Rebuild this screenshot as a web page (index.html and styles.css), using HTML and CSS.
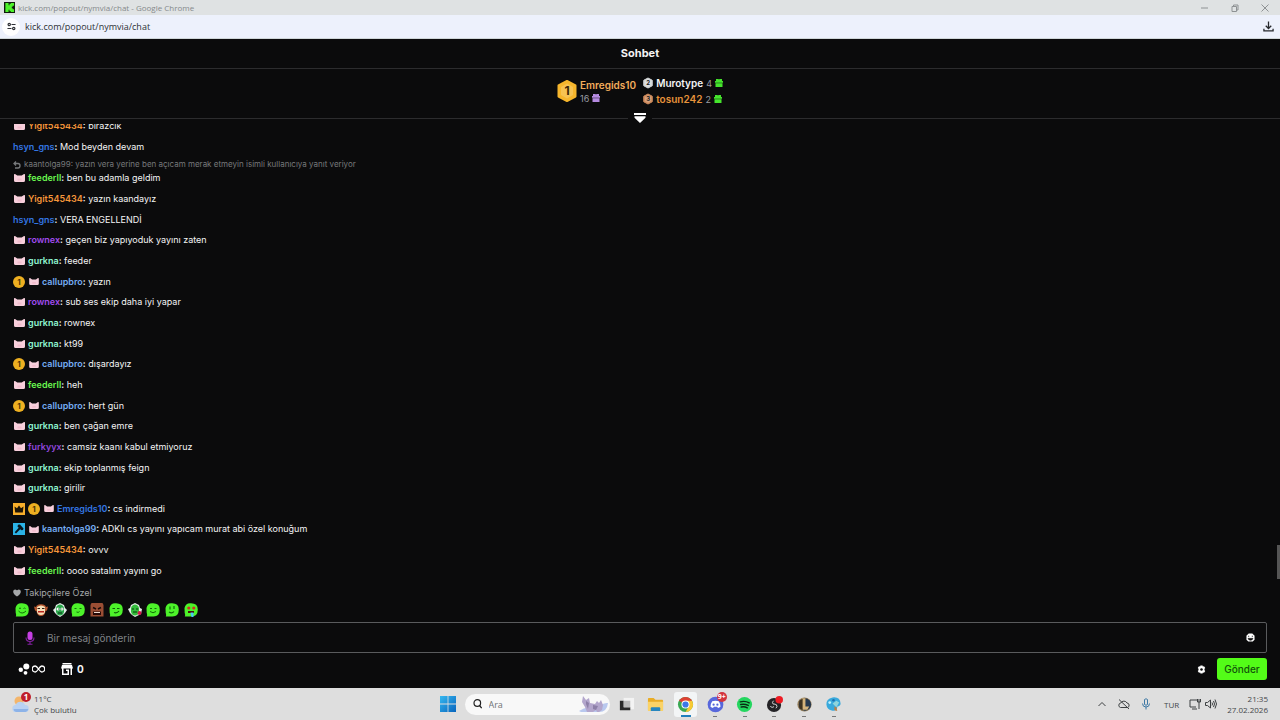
FILE: index.html
```html
<!DOCTYPE html>
<html lang="tr">
<head>
<meta charset="utf-8">
<title>kick.com/popout/nymvia/chat</title>
<link rel="stylesheet" href="styles.css">
</head>
<body>
<svg class="defs" aria-hidden="true">
  <symbol id="pig" viewBox="0 0 11 8"><path d="M0 .3 1 0 3.300 1.600H7.700L10 0l1 .3V6.500Q11 8 9.500 8H1.500Q0 8 0 6.500Z" fill="#f8cfdc"/><path d="M3.500 4.500h4v2h-4z" fill="#f2bccd"/></symbol>
  <symbol id="gift" viewBox="0 0 8 8"><path d="M1 0h2.500L4 .8 4.500 0H7v2h1v1.800H0V2h1zM.5 4.300h7V8h-7z" fill="currentColor"/><path d="M.5 3.800h7v.7h-7z" fill="currentColor" opacity=".4"/></symbol>
  <symbol id="crown" viewBox="0 0 12 12"><path d="M0 0h12v12H0z" fill="#f7ae2b"/><path d="M1.500 3.500 4 5.200 6 2.500l2 2.700 2.500-1.700L9.800 9.500H2.200z" fill="#1d1405"/></symbol>
  <symbol id="hammer" viewBox="0 0 12 12"><path d="M0 0h12v12H0z" fill="#2bb3e6"/><path d="M5 1.800 7 1.500 10.500 5.500 10 7 8.500 7.200 7.200 6.200 3 10.500 1.700 9.300 5.700 4.800 4.500 3.500z" fill="#08161d"/></symbol>
  <symbol id="blob" viewBox="0 0 14 14"><path d="M.5 5Q1.500 .5 6 .3 13.800-.2 13.800 6.500 13.800 13.500 7.500 13.500H.8Q1.500 12 .7 10Z" fill="#4df32a"/></symbol>
  <symbol id="hexa" viewBox="0 0 20 22"><path d="M10 1 18.500 5.500V16.500L10 21 1.500 16.500V5.500Z" fill="currentColor" stroke="currentColor" stroke-width="2" stroke-linejoin="round"/><path d="M10 3.500 16 7V15L10 18.500 4 15V7Z" fill="#fff" opacity=".18"/></symbol>
</svg>

<header class="titlebar">
  <svg class="favicon" viewBox="0 0 12 12"><path d="M0 0h12v12H0z" fill="#101a0e"/><path d="M1.500 1H5v2.500h1V2h1.500V1H11v3H9.500v1.200H8.500v1.600h1V8H11v3H7.500v-1H6V8.500H5V11H1.500z" fill="#4df32a"/></svg>
  <span class="window-title">kick.com/popout/nymvia/chat - Google Chrome</span>
  <div class="window-buttons">
    <button type="button" aria-label="Simge durumuna küçült"><svg viewBox="0 0 8 8"><path d="M0 4h7"/></svg></button>
    <button type="button" aria-label="Önceki boyut"><svg viewBox="0 0 8 8"><path d="M1 2.500h4.500v5H1zM2.500 2.500v-1.500h4.500v5H5.500"/></svg></button>
    <button type="button" aria-label="Kapat"><svg viewBox="0 0 8 8"><path d="m.5.5 7 7m0-7-7 7"/></svg></button>
  </div>
</header>

<div class="addressbar">
  <button type="button" class="site-info" aria-label="Site bilgileri"><svg viewBox="0 0 10 10" fill="none" stroke="#303236" stroke-width="1.300"><circle cx="2.500" cy="2.800" r="1.300"/><path d="M5 2.800h4.500M.5 7.200H5"/><circle cx="7.500" cy="7.200" r="1.300"/></svg></button>
  <input class="url" type="text" value="kick.com/popout/nymvia/chat" aria-label="Adres">
  <button type="button" class="install" aria-label="Yükle"><svg viewBox="0 0 12 12" fill="none" stroke="#26282c" stroke-width="1.400"><path d="M6 .5V8M3 5.200l3 3 3-3M1 8.500v2.300h10V8.500"/></svg></button>
</div>

<main class="chat">
  <h1 class="chat-title">Sohbet</h1>
  <section class="leaders">
    <div class="leader-first">
      <span class="rank rank-big gold"><svg><use href="#hexa"/></svg><b>1</b></span>
      <div>
        <div class="leader-name peach">Emregids10</div>
        <div class="gifts">16 <svg class="gift purple"><use href="#gift"/></svg></div>
      </div>
    </div>
    <div class="leader-rest">
      <div class="leader"><span class="rank silver"><svg><use href="#hexa"/></svg><b>2</b></span><span class="leader-name">Murotype</span><span class="gifts">4 <svg class="gift green"><use href="#gift"/></svg></span></div>
      <div class="leader"><span class="rank bronze"><svg><use href="#hexa"/></svg><b>3</b></span><span class="leader-name orange">tosun242</span><span class="gifts">2 <svg class="gift green"><use href="#gift"/></svg></span></div>
    </div>
  </section>
  <div class="divider"><button type="button" aria-label="Genişlet"><svg viewBox="0 0 12 10"><path d="M0 0h12v2H0zM.5 3.200h11v1.500L6 10 .5 4.700z" fill="#fff"/></svg></button></div>

  <div class="log">
    <ul class="messages">
      <li><svg class="pig"><use href="#pig"/></svg><p><b class="c-orange">Yigit545434</b><b>:</b> birazcık</p></li>
      <li><p><b class="c-blue">hsyn_gns</b><b>:</b> Mod beyden devam</p></li>
      <li class="with-reply"><div class="reply"><svg viewBox="0 0 8 8" fill="none" stroke="#77797b" stroke-width="1.300"><path d="M3 .5 1 2.500l2 2M1 2.500h4Q7 2.500 7 4.700T5 7H2"/></svg>kaantolga99: yazın vera yerine ben açıcam merak etmeyin isimli kullanıcıya yanıt veriyor</div><div class="line"><svg class="pig"><use href="#pig"/></svg><p><b class="c-green">feederll</b><b>:</b> ben bu adamla geldim</p></div></li>
      <li><svg class="pig"><use href="#pig"/></svg><p><b class="c-orange">Yigit545434</b><b>:</b> yazın kaandayız</p></li>
      <li><p><b class="c-blue">hsyn_gns</b><b>:</b> VERA ENGELLENDİ</p></li>
      <li><svg class="pig"><use href="#pig"/></svg><p><b class="c-purple">rownex</b><b>:</b> geçen biz yapıyoduk yayını zaten</p></li>
      <li><svg class="pig"><use href="#pig"/></svg><p><b class="c-mint">gurkna</b><b>:</b> feeder</p></li>
      <li><span class="coin">1</span><svg class="pig small"><use href="#pig"/></svg><p><b class="c-sky">callupbro</b><b>:</b> yazın</p></li>
      <li><svg class="pig"><use href="#pig"/></svg><p><b class="c-purple">rownex</b><b>:</b> sub ses ekip daha iyi yapar</p></li>
      <li><svg class="pig"><use href="#pig"/></svg><p><b class="c-mint">gurkna</b><b>:</b> rownex</p></li>
      <li><svg class="pig"><use href="#pig"/></svg><p><b class="c-mint">gurkna</b><b>:</b> kt99</p></li>
      <li><span class="coin">1</span><svg class="pig small"><use href="#pig"/></svg><p><b class="c-sky">callupbro</b><b>:</b> dışardayız</p></li>
      <li><svg class="pig"><use href="#pig"/></svg><p><b class="c-green">feederll</b><b>:</b> heh</p></li>
      <li><span class="coin">1</span><svg class="pig small"><use href="#pig"/></svg><p><b class="c-sky">callupbro</b><b>:</b> hert gün</p></li>
      <li><svg class="pig"><use href="#pig"/></svg><p><b class="c-mint">gurkna</b><b>:</b> ben çağan emre</p></li>
      <li><svg class="pig"><use href="#pig"/></svg><p><b class="c-violet">furkyyx</b><b>:</b> camsiz kaanı kabul etmiyoruz</p></li>
      <li><svg class="pig"><use href="#pig"/></svg><p><b class="c-mint">gurkna</b><b>:</b> ekip toplanmış feign</p></li>
      <li><svg class="pig"><use href="#pig"/></svg><p><b class="c-mint">gurkna</b><b>:</b> girilir</p></li>
      <li><svg class="badge"><use href="#crown"/></svg><span class="coin">1</span><svg class="pig small"><use href="#pig"/></svg><p><b class="c-blue">Emregids10</b><b>:</b> cs indirmedi</p></li>
      <li><svg class="badge"><use href="#hammer"/></svg><svg class="pig small"><use href="#pig"/></svg><p><b class="c-sky">kaantolga99</b><b>:</b> ADKlı cs yayını yapıcam murat abi özel konuğum</p></li>
      <li><svg class="pig"><use href="#pig"/></svg><p><b class="c-orange">Yigit545434</b><b>:</b> ovvv</p></li>
      <li><svg class="pig"><use href="#pig"/></svg><p><b class="c-green">feederll</b><b>:</b> oooo satalım yayını go</p></li>
    </ul>
    <div class="scroll-thumb"></div>
  </div>

  <form class="composer">
    <div class="mode"><svg viewBox="0 0 8 8"><path d="M4 7.500C-2 3.500.5.500 2.200.5 3.300.5 4 1.500 4 1.500S4.700.5 5.800.5C7.500.5 10 3.500 4 7.500Z" fill="#a6a8aa"/></svg>Takipçilere Özel</div>
    <div class="emotes">
      <button type="button" aria-label="Gülümseme"><svg viewBox="0 0 14 14"><use href="#blob"/><path d="M4 5.500q1-1 2 0M8.500 5.500q1-1 2 0M3.500 8q3.500 4 7.500 0" fill="none" stroke="#126d0a" stroke-width="1"/></svg></button>
      <button type="button" aria-label="Maymun"><svg viewBox="0 0 14 14"><path d="M2 4Q3 1 7 1.200 11 1 12 4l2-.5-1 4-1.500.5Q11 13 7 13T2.500 8L1 7.500 0 3.500z" fill="#b5552d"/><path d="M3 4Q7 1 11 4v5q-1 3-4 3T3 9z" fill="#f6dfb8"/><path d="M3.500 5.500h2.500M8 5.500h2.500" stroke="#2a1710"/><path d="M4 8h6v1.500H4z" fill="#b8231d"/></svg></button>
      <button type="button" aria-label="Soğuk"><svg viewBox="0 0 14 14"><path d="m0 7 2-2 1-3 4-2 4 2 1 3 2 2-2 3-2 2-3 2-3-2-2-2z" fill="#e4eee9"/><path d="M3 5Q4 1.500 7 1.500T11 5v4q-1 3.500-4 3.500T3 9z" fill="#2aa64a"/><circle cx="5" cy="6" r="1.500" fill="#fff"/><circle cx="9" cy="6" r="1.500" fill="#fff"/><path d="M5 6h.8M8.500 6h.8M5 10h4" stroke="#073313"/></svg></button>
      <button type="button" aria-label="Düz yüz"><svg viewBox="0 0 14 14"><use href="#blob"/><path d="M3.500 5.500h2M8.500 5.500h2M5.500 9q2 1 3-.5" fill="none" stroke="#126d0a"/></svg></button>
      <button type="button" aria-label="Kızgın"><svg viewBox="0 0 14 14"><path d="M1.500 0h11l1 2v11.500h-13V2z" fill="#9a4e34"/><path d="M3 4.500 6 6M11 4.500 8 6" stroke="#1a0b08" stroke-width="1.500"/><path d="M3 8.500h8V12H3z" fill="#260a08"/><path d="M4 9h6v1H4z" fill="#f3ded3"/></svg></button>
      <button type="button" aria-label="Sırıtma"><svg viewBox="0 0 14 14"><use href="#blob"/><path d="M3.500 5.500h2.500M8 5.500h2.500M5 9.500q3 1 5-1.500" fill="none" stroke="#0d5908" stroke-width="1.200"/></svg></button>
      <button type="button" aria-label="Çiçek"><svg viewBox="0 0 14 14"><path d="m0 6 2-1 1-3 4-2 4 2 1 3 2 1-1 5-6 3-3-2-2-2z" fill="#e9eeea"/><path d="M3 5q1-3.500 4-3.500T11 5v4q-1 3.500-4 3.500T3 9z" fill="#35bd3d"/><path d="M4 6h2M8 6h2M5 9h4" stroke="#083c0c" stroke-width="1.200"/><circle cx="11.500" cy="10" r="2" fill="#d31a4c"/></svg></button>
      <button type="button" aria-label="Mutlu"><svg viewBox="0 0 14 14"><use href="#blob"/><path d="M4 5.500h2M8.500 5.500h2M4 8.500q3 2.500 6 0" fill="none" stroke="#126d0a"/></svg></button>
      <button type="button" aria-label="Düşünceli"><svg viewBox="0 0 14 14"><use href="#blob"/><path d="M5 3.500v3M9 3v3M4 9q3 2 5-.5" fill="none" stroke="#126d0a" stroke-width="1.200"/></svg></button>
      <button type="button" aria-label="Hayran"><svg viewBox="0 0 14 14"><use href="#blob"/><circle cx="4.800" cy="5" r="1.600" fill="#d32e22"/><circle cx="9.800" cy="5" r="1.600" fill="#d32e22"/><path d="M4 8h6v2H4z" fill="#48140c"/><path d="M6.500 9.500h3V14h-2z" fill="#48c9f2"/></svg></button>
    </div>
    <div class="message-box">
      <svg class="mic" viewBox="0 0 10 14"><rect x="2.500" y=".5" width="5" height="8.500" rx="2.500" fill="#c63fe4"/><path d="M1 6.500q0 4 4 4t4-4M5 10.500V13M2.500 13.300h5" fill="none" stroke="#8520a3" stroke-width="1.100"/></svg>
      <input type="text" placeholder="Bir mesaj gönderin" aria-label="Bir mesaj gönderin">
      <button type="button" aria-label="Emoji"><svg viewBox="0 0 10 10"><path d="M3 .5h4L9.500 3v4.500L7.500 9.500h-5L.5 7.500V3z" fill="#fff"/><path d="M3 3v1.500M7 3v1.500M2.300 6h5.400q-.5 2-2.700 2T2.300 6Z" stroke="#111" stroke-width=".8" fill="#111"/></svg></button>
    </div>
    <div class="tools">
      <button type="button" class="tool" aria-label="Kanal puanları"><svg class="dots" viewBox="0 0 12 12"><circle cx="8.300" cy="3.500" r="3" fill="#fff"/><circle cx="2.800" cy="6.800" r="2.200" fill="#fff"/><circle cx="7.500" cy="9.800" r="1.900" fill="#fff"/></svg><svg class="infinity" viewBox="0 0 13 8"><path d="M6.500 4C5 1.800 4.200 1 3.200 1a3 3 0 0 0 0 6C4.200 7 5 6.200 6.500 4S8.800 1 9.800 1a3 3 0 0 1 0 6C8.800 7 8 6.200 6.500 4Z" fill="none" stroke="#fff" stroke-width="1.300"/></svg></button>
      <button type="button" class="tool"><svg class="shop" viewBox="0 0 12 12"><path d="M1.500 0h9v1.500h-9zM1 2h10l1 3.500H0zM1 5.500h1.500v5H6.500v-3H8V12H1zM5 6.500h3V8H5zM9.500 5.500H11V12H9.500z" fill="#fff"/></svg>0</button>
      <button type="button" class="settings" aria-label="Ayarlar"><svg viewBox="0 0 10 10"><path d="M3.800.5h2.400l.3 1.300 1.300-.5L9.200 3.300 8.300 4.300v1.400l.9 1-1.400 2-1.300-.5-.3 1.300H3.800l-.3-1.300-1.300.5-1.400-2 .9-1V4.300l-.9-1 1.400-2 1.300.5z" fill="#fff"/><circle cx="5" cy="5" r="1.400" fill="#0b0b0c"/></svg></button>
      <button type="submit" class="send">Gönder</button>
    </div>
  </form>
</main>

<footer class="taskbar">
  <button type="button" class="weather">
    <span class="weather-icon"><svg viewBox="0 0 18 18"><circle cx="7" cy="6" r="4.500" fill="#f3b56b"/><path d="M4 17a3.500 3.500 0 0 1-.3-7A5 5 0 0 1 13 10a3.500 3.500 0 0 1 .5 7Z" fill="#b9d2f3"/><path d="M4 17a3.500 3.500 0 0 1-2.500-3h14.800a3.500 3.500 0 0 1-2.800 3Z" fill="#8db3e8"/></svg><b>1</b></span>
    <span class="weather-text"><span>11°C</span><span>Çok bulutlu</span></span>
  </button>
  <nav class="dock">
    <button type="button" class="start" aria-label="Başlat"><svg viewBox="0 0 16 16"><defs><linearGradient id="win" x2="1" y2="1"><stop stop-color="#35b8f0"/><stop offset="1" stop-color="#0864bd"/></linearGradient></defs><path d="M0 0h7.600v7.600H0zM8.400 0H16v7.600H8.400zM0 8.400h7.600V16H0zM8.400 8.400H16V16H8.400z" fill="url(#win)"/></svg></button>
    <label class="search"><svg class="lens" viewBox="0 0 10 10"><circle cx="5.300" cy="4" r="3.300" fill="none" stroke="#222" stroke-width="1.200"/><path d="M7.500 6.500 9.700 9.200" stroke="#222" stroke-width="1.300"/></svg><input type="text" placeholder="Ara" aria-label="Ara"><svg class="critter" viewBox="0 0 30 18"><path d="M1 16Q9 10 17 14q8-7 13-6-1 9-9 9H3Z" fill="#b9c8ee"/><path d="m5 1 3 4 3-2 1 5 5 1 2-3 2 2 2-3 2 5-1 5-3 2h-2l-1-2-3 2H9L7 12 4 7z" fill="#b3a6cc"/><path d="m8 6 3 2-1 6-2-5zM15 10l5 1-2 4-3-1z" fill="#8d80a8"/></svg></label>
    <div class="apps">
      <button type="button" class="app" aria-label="Görev görünümü"><svg viewBox="0 0 18 18"><path d="M6 2h11v12H6z" fill="#f3f3f3"/><path d="M2 5h4v7h7v3H2z" fill="#292929"/><path d="M6 5h7v7H6z" fill="#bcbcbc"/></svg></button>
      <button type="button" class="app" aria-label="Dosya Gezgini"><svg viewBox="0 0 18 18"><path d="M1 3q0-1 1-1h5l2 2h7q1 0 1 1v10H1z" fill="#e9ac25"/><path d="M1 6h16v9q0 1-1 1H2q-1 0-1-1z" fill="#fbd367"/><path d="M4 16v-3q0-1 1-1h8q1 0 1 1v3z" fill="#2686bf"/></svg></button>
      <button type="button" class="app active running" aria-label="Chrome"><svg viewBox="0 0 18 18"><circle cx="9" cy="9" r="8" fill="#39a852"/><path d="M9 9 2.100 5A8 8 0 0 1 15.900 5Z" fill="#dd4134"/><path d="M9 5h6.900A8 8 0 0 1 9 17l3.500-6Z" fill="#f9c932"/><circle cx="9" cy="9" r="4.300" fill="#fff"/><circle cx="9" cy="9" r="3.300" fill="#3c78e7"/></svg></button>
      <button type="button" class="app running" aria-label="Discord"><svg viewBox="0 0 18 18"><circle cx="9" cy="9" r="8.300" fill="#5767dc"/><path d="M5.500 5.500Q9 4.300 12.500 5.500q2 3 1.800 6-1.300 1.100-2.700 1.200l-.8-1.200H7.200l-.8 1.200q-1.400-.1-2.700-1.200-.2-3 1.800-6Z" fill="#fff"/><circle cx="7" cy="9.200" r="1.200" fill="#5767dc"/><circle cx="11" cy="9.200" r="1.200" fill="#5767dc"/></svg><b class="count">9+</b></button>
      <button type="button" class="app running" aria-label="Spotify"><svg viewBox="0 0 18 18"><circle cx="9" cy="9" r="8" fill="#24d65f"/><path d="M4.500 6.200Q9.500 4.800 14 7.200M5 9q4-1 8 1M5.500 11.700q3.500-.8 6.500.8" fill="none" stroke="#092b14" stroke-width="1.500" stroke-linecap="round"/></svg></button>
      <button type="button" class="app running" aria-label="OBS"><svg viewBox="0 0 18 18"><circle cx="8.500" cy="9.500" r="7.500" fill="#242326"/><path d="M8 5q-2 1.500-.5 3.500 3-.5 3.500 1.500M4.500 11q2 2 4 .3M10.500 13q2-1.500.5-4" fill="none" stroke="#d9d9d9" stroke-width="1"/><circle cx="14" cy="4" r="4" fill="#ee1b24"/></svg></button>
      <button type="button" class="app running" aria-label="League of Legends"><svg viewBox="0 0 18 18"><circle cx="9" cy="9" r="7.500" fill="#8f7a58"/><circle cx="9.500" cy="9" r="6.500" fill="#26384e"/><path d="M6 2.500h4v8.500h4l-2 3.500H6z" fill="#d3b27b"/><path d="M3.500 5 7 3v12l-3.500-2z" fill="#3d3220"/></svg></button>
      <button type="button" class="app running" aria-label="Paint"><svg viewBox="0 0 18 18"><path d="M1.500 9Q1 3 8 1.500q8-1 8.500 6.500 0 3-3.500 3 0 5-5 4.500Q2 15 1.500 9Z" fill="#39a9dc"/><circle cx="5" cy="7" r="1.500" fill="#bdf0ff"/><circle cx="9" cy="4.500" r="1.300" fill="#1e6fae"/><path d="m8 8 4-3 3 2-3 5z" fill="#8fd4dc"/><path d="m10 11 2 1 1 4-3-1z" fill="#c27c3f"/></svg></button>
    </div>
  </nav>
  <div class="tray">
    <button type="button" aria-label="Gizli simgeler"><svg viewBox="0 0 12 12"><path d="m2.500 8 3.500-3.500L9.500 8"/></svg></button>
    <button type="button" aria-label="OneDrive"><svg viewBox="0 0 12 12"><path d="M2.500 9.500a2.300 2.300 0 0 1 .3-4.500A3.500 3.500 0 0 1 9 5a2.300 2.300 0 0 1 .5 4.500ZM1 1.500l10 9.500"/></svg></button>
    <button type="button" class="tray-mic" aria-label="Mikrofon"><svg viewBox="0 0 12 12"><path d="M4.500 1.500q1.500-1.500 3 0v5q-1.500 1.500-3 0zM2.500 5.500q0 3.500 3.500 3.500t3.500-3.500M6 9v2.500"/></svg></button>
    <button type="button" class="lang">TUR</button>
    <button type="button" class="net" aria-label="Ağ ve ses"><svg viewBox="0 0 12 12"><path d="M8 2H1v7h6M3 11h5M10 1v10M8.500 1v3h3V1"/></svg><svg viewBox="0 0 12 12"><path d="M.5 4.500h2l3-2.500v8L2.500 7.500h-2zM7 4.500q1 1.500 0 3M8.500 3q2 3 0 6M10 1.500q3 4.500 0 9"/></svg></button>
    <button type="button" class="clock"><span>21:35</span><span>27.02.2026</span></button>
  </div>
</footer>
</body>
</html>
```
FILE: styles.css
```css
* { box-sizing: border-box; }

body {
  margin: 0;
  height: 100vh;
  min-height: 640px;
  display: flex;
  flex-direction: column;
  overflow: hidden;
  background: #0b0b0c;
  color: #f4f4f4;
  font-family: Inter, "Liberation Sans", sans-serif;
  font-size: 9px;
}

button, input {
  padding: 0;
  border: 0;
  background: none;
  color: inherit;
  font: inherit;
  outline: 0;
}

svg { display: block; flex: none; }
h1, p, ul { margin: 0; padding: 0; }
.defs { position: absolute; width: 0; height: 0; }

/* Browser frame */
.titlebar, .addressbar, .taskbar { font-family: "Open Sans", "Noto Sans", sans-serif; }

.titlebar {
  display: flex;
  align-items: center;
  flex: none;
  height: 15px;
  padding: 0 11px 0 4px;
  background: #dfe2e3;
}
.favicon { width: 11px; height: 11px; }
.window-title { margin-left: 3px; color: #85898b; font-size: 8px; line-height: 12px; }
.window-buttons { display: flex; gap: 22px; margin-left: auto; }
.window-buttons svg { width: 8px; height: 8px; fill: none; stroke: #8e9294; stroke-width: 1; }

.addressbar {
  display: flex;
  align-items: center;
  flex: none;
  height: 24px;
  padding: 0 6px 0 2px;
  border-bottom: 1px solid #cfd6d8;
  background: #edf1fc;
}
.site-info {
  display: grid;
  place-items: center;
  width: 18px;
  height: 18px;
  border-radius: 50%;
  background: #fff;
}
.site-info svg { width: 9px; height: 9px; }
.url { flex: 1; margin-left: 5px; color: #2e3136; font-size: 9px; line-height: 14px; }
.install svg { width: 11px; height: 11px; }

/* Chat */
.chat { display: flex; flex: 1; flex-direction: column; min-height: 0; }
.chat-title {
  flex: none;
  border-bottom: 1px solid #2c2c2e;
  font-size: 11px;
  font-weight: 700;
  line-height: 29px;
  text-align: center;
}

.leaders { display: flex; flex: none; justify-content: center; gap: 7px; padding-top: 6px; }
.leader-first { display: flex; align-items: center; gap: 3px; }
.leader-name { font-size: 10px; font-weight: 600; line-height: 14px; }
.gifts { display: flex; align-items: center; gap: 3px; color: #9a9ca3; font-size: 9px; line-height: 13px; }
.gift { width: 8px; height: 8px; }
.peach { color: #f3ad5c; }
.orange { color: #e7933b; }
.purple { color: #b58ae0; }
.green { color: #45e52c; }
.leader-rest { display: flex; flex-direction: column; }
.leader { display: flex; align-items: center; gap: 3px; height: 16px; }
.rank { display: grid; place-items: center; width: 10px; height: 12px; }
.rank > * { grid-area: 1 / 1; }
.rank svg { width: 100%; height: 100%; }
.rank b { z-index: 1; color: #222; font-size: 6px; line-height: 8px; }
.rank-big { width: 20px; height: 22px; }
.rank-big b { font-size: 12px; line-height: 14px; color: #3b2603; }
.gold { color: #f6b62c; }
.silver { color: #d6d8da; }
.bronze { color: #d08d5f; }

.divider { display: flex; flex: none; align-items: center; gap: 6px; height: 12px; margin-top: 5px; }
.divider::before, .divider::after { content: ""; flex: 1; height: 1px; background: #2c2c2e; }
.divider svg { width: 12px; height: 10px; }

.log { position: relative; display: flex; flex: 1; flex-direction: column; min-height: 0; overflow: hidden; }
.messages {
  display: flex;
  flex: 1;
  flex-direction: column;
  justify-content: space-between;
  margin-top: -6px;
  padding: 0 13px;
  list-style: none;
}
.messages li, .line { display: flex; align-items: center; gap: 3px; height: 16px; line-height: 16px; }
.messages b { font-weight: 600; }
.messages .with-reply { display: block; height: 27px; }
.reply { display: flex; align-items: center; gap: 3px; height: 11px; color: #77797b; font-size: 8px; line-height: 11px; }
.reply svg { width: 8px; height: 8px; }
.pig { width: 11px; height: 8px; margin-left: 1px; }
.pig.small { width: 10px; height: 7px; }
.badge { width: 12px; height: 12px; }
.coin {
  width: 12px;
  height: 12px;
  border-radius: 50%;
  background: #eeb021;
  color: #503404;
  font-size: 8px;
  font-weight: 700;
  line-height: 12px;
  text-align: center;
}
.c-orange { color: #f6963a; }
.c-blue { color: #3477e4; }
.c-green { color: #69f54f; }
.c-purple { color: #a14cf0; }
.c-violet { color: #8f46db; }
.c-mint { color: #90f6d2; }
.c-sky { color: #74abf2; }
.scroll-thumb { position: absolute; right: 0; bottom: -1px; width: 3px; height: 35px; background: #555; }

.composer { flex: none; padding: 8px 13px; }
.mode { display: flex; align-items: center; gap: 3px; color: #a6a8aa; font-size: 9px; line-height: 11px; }
.mode svg { width: 8px; height: 8px; }
.emotes { display: grid; grid-template-columns: repeat(10, 1fr); width: 187px; margin-top: 5px; justify-items: center; }
.emotes svg { width: 14px; height: 14px; }
.message-box {
  display: flex;
  align-items: center;
  height: 31px;
  margin-top: 5px;
  padding: 0 11px;
  border: 1px solid #5a5b5d;
  border-radius: 2px;
}
.mic { width: 10px; height: 14px; }
.message-box input { flex: 1; margin-left: 12px; font-size: 10px; line-height: 14px; }
.message-box input::placeholder { color: #808488; opacity: 1; }
.message-box button svg { width: 9px; height: 9px; }
.tools { display: flex; align-items: center; margin-top: 5px; padding-left: 5px; }
.tool { display: flex; align-items: center; margin-right: 16px; font-size: 10px; font-weight: 700; }
.dots { width: 12px; height: 12px; }
.infinity { width: 13px; height: 8px; margin-left: 2px; }
.shop { width: 12px; height: 12px; margin-right: 4px; }
.settings { margin-left: auto; }
.settings svg { width: 9px; height: 9px; }
.send {
  width: 50px;
  height: 22px;
  margin-left: 11px;
  border-radius: 3px;
  background: #53fc18;
  color: #12520a;
  font-size: 10px;
  font-weight: 500;
}

/* Taskbar */
.taskbar {
  display: grid;
  grid-template-columns: 1fr auto 1fr;
  align-items: center;
  flex: none;
  height: 32px;
  padding: 0 12px;
  background: #dedede;
  color: #44474a;
  font-size: 8px;
}
.weather { display: flex; gap: 4px; justify-self: start; text-align: left; }
.weather-icon { position: relative; width: 18px; }
.weather-icon svg { width: 18px; height: 18px; margin-top: 2px; }
.weather-icon b, .count {
  position: absolute;
  top: -1px;
  right: 0;
  width: 10px;
  height: 10px;
  border-radius: 50%;
  background: #bf1d2b;
  color: #fff;
  font-size: 8px;
  line-height: 10px;
  text-align: center;
}
.weather-icon b { right: -1px; }
.weather-text, .clock { display: flex; flex-direction: column; line-height: 11px; }
.dock { display: flex; align-items: center; gap: 2px; padding-left: 1px; }
.start { display: grid; place-items: center; width: 30px; height: 32px; }
.start svg { width: 16px; height: 16px; }
.search {
  display: flex;
  align-items: center;
  width: 145px;
  height: 21px;
  padding: 0 2px 0 7px;
  border-radius: 11px;
  background: #f8f8f8;
}
.lens { width: 10px; height: 10px; }
.search input { flex: 1; min-width: 0; margin-left: 7px; font-size: 9px; }
.search input::placeholder { color: #707376; opacity: 1; }
.critter { width: 30px; height: 18px; }
.apps { display: grid; grid-template-columns: repeat(8, 1fr); width: 237px; }
.app { position: relative; display: grid; justify-self: center; place-items: center; width: 23px; height: 25px; border-radius: 3px; }
.app svg { width: 17px; height: 17px; }
.active { background: #f3f5f6; }
.running::after { content: ""; position: absolute; bottom: 0; left: 50%; width: 4px; height: 1px; margin-left: -2px; background: #777; }
.active::after { width: 10px; height: 2px; margin-left: -5px; background: #1f7fbd; }
.count { top: 0; background: #d2343f; font-size: 7px; }
.tray { display: flex; align-items: center; justify-self: end; }
.tray svg { width: 12px; height: 12px; fill: none; stroke: #3d4042; stroke-width: 1; }
.tray button { margin-left: 10px; }
.tray .tray-mic svg { stroke: #3d78a5; }
.tray .lang { margin-left: 12px; }
.net { display: flex; gap: 4px; }
.clock { align-items: flex-end; }
```
